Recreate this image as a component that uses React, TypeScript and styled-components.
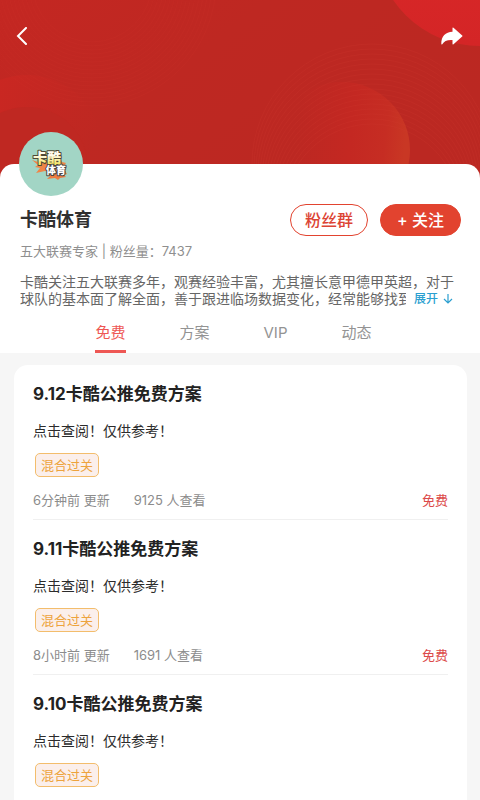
import React, { useState } from "react";
import styled, { createGlobalStyle } from "styled-components";

const GlobalStyle = createGlobalStyle`
  * { box-sizing: border-box; }
  body {
    margin: 0;
    background: #f6f6f6;
    color: #262626;
    font-family: Inter, "Noto Sans CJK SC", sans-serif;
  }
  button {
    margin: 0;
    padding: 0;
    border: 0;
    background: none;
    font-family: inherit;
    cursor: pointer;
  }
  h1, h2, p, ul { margin: 0; padding: 0; }
`;

const Page = styled.div`
  display: flex;
  flex-direction: column;
  min-height: 100vh;
  background: #f6f6f6;
`;

const Hero = styled.header`
  position: relative;
  height: 184px;
  overflow: hidden;
  background: #bd2822;
`;

const HeroArt = styled.svg`
  position: absolute;
  inset: 0;
  width: 100%;
  height: 100%;
`;

const TopBar = styled.nav`
  position: relative;
  display: flex;
  justify-content: space-between;
  align-items: center;
  padding: 20px 12px 0;
`;

const IconButton = styled.button`
  display: flex;
  align-items: center;
  justify-content: center;
  width: 32px;
  height: 32px;
  color: #fff;

  &:first-child { width: 20px; }
`;

const Sheet = styled.section`
  position: relative;
  margin-top: -20px;
  padding: 0 19px 0 20px;
  border-radius: 14px 14px 0 0;
  background: #fff;
`;

const Avatar = styled.div`
  width: 64px;
  height: 64px;
  margin: -32px 0 0 -1px;
  border-radius: 50%;
  overflow: hidden;
  background: #a2d5c5;

  svg { display: block; }
`;

const NameRow = styled.div`
  display: flex;
  align-items: center;
  gap: 12px;
  margin-top: 8px;
`;

const Name = styled.h1`
  flex: 1;
  font-size: 18px;
  line-height: 24px;
  font-weight: 700;
  color: #303030;
`;

const Pill = styled.button<{ $filled?: boolean }>`
  height: 32px;
  padding: 0 ${(p) => (p.$filled ? 16 : 14)}px;
  border: 1px solid #e2432f;
  border-radius: 16px;
  background: ${(p) => (p.$filled ? "#e2432f" : "#fff")};
  color: ${(p) => (p.$filled ? "#fff" : "#dc4434")};
  font-size: 16px;
  line-height: 30px;
  font-weight: 500;
  white-space: nowrap;
`;

const Stats = styled.p`
  margin-top: 6px;
  font-size: 13px;
  line-height: 18px;
  color: #8f8f8f;
`;

const Bio = styled.div`
  position: relative;
  margin-top: 13px;
`;

const BioText = styled.p<{ $open: boolean }>`
  max-height: ${(p) => (p.$open ? "none" : "34px")};
  overflow: hidden;
  font-size: 14px;
  line-height: 17px;
  color: #666;
`;

const Expand = styled.button`
  position: absolute;
  right: 0;
  bottom: 0;
  display: flex;
  align-items: center;
  gap: 5px;
  padding: 0 8px;
  background: #fff;
  color: #2b9fd0;
  font-size: 12px;
  line-height: 17px;
  font-weight: 500;
`;

const Tabs = styled.div`
  display: flex;
  justify-content: center;
  gap: 54px;
  padding: 16px 14px 0 0;
`;

const Tab = styled.button<{ $active: boolean }>`
  padding-bottom: 7px;
  border-bottom: 3px solid ${(p) => (p.$active ? "#ee5754" : "transparent")};
  color: ${(p) => (p.$active ? "#ee5754" : "#939393")};
  font-size: 15px;
  line-height: 20px;
`;

const Card = styled.ul`
  flex: 1;
  margin: 12px 13px 0 14px;
  padding: 0 19px;
  border-radius: 14px 14px 0 0;
  background: #fff;
  list-style: none;
`;

const Item = styled.li`
  padding: 17px 0 10px;

  &:not(:last-child) { border-bottom: 1px solid #f0f0f0; }
`;

const Title = styled.h2`
  font-size: 17px;
  line-height: 24px;
  font-weight: 700;
  color: #222;
`;

const Summary = styled.p`
  margin-top: 15px;
  font-size: 14px;
  line-height: 20px;
  color: #2c2c2c;
`;

const Tag = styled.span`
  display: block;
  width: fit-content;
  height: 24px;
  margin: 12px 0 0 2px;
  padding: 0 5px;
  border: 1px solid #f3bd6c;
  border-radius: 5px;
  background: #fbefeb;
  color: #eda33d;
  font-size: 13px;
  line-height: 22px;
`;

const Meta = styled.div`
  display: flex;
  gap: 24px;
  margin-top: 14px;
  font-size: 13px;
  line-height: 18px;
  color: #8c8c8c;
`;

const Price = styled.span`
  margin-left: auto;
  color: #dc4a4a;
`;

const rings = Array.from({ length: 17 }, (_, i) => i);

const TABS = ["免费", "方案", "VIP", "动态"];

type Post = { date: string; updated?: string; views?: string };

const POSTS: Post[] = [
  { date: "9.12", updated: "6分钟前 更新", views: "9125 人查看" },
  { date: "9.11", updated: "8小时前 更新", views: "1691 人查看" },
  { date: "9.10" },
];

function HeroBackground() {
  return (
    <HeroArt viewBox="0 0 480 184" preserveAspectRatio="xMidYMin slice" aria-hidden="true">
      <defs>
        <linearGradient id="base" x1="0" y1="0" x2="1" y2="0.5">
          <stop offset="0" stopColor="#c42722" />
          <stop offset="0.45" stopColor="#be2822" />
          <stop offset="1" stopColor="#bb2822" />
        </linearGradient>
        <linearGradient id="band" x1="0" y1="0" x2="1" y2="0.35">
          <stop offset="0.2" stopColor="#cc2722" />
          <stop offset="1" stopColor="#c42722" stopOpacity="0" />
        </linearGradient>
        <linearGradient id="ball" x1="0" y1="0" x2="1" y2="0.1">
          <stop offset="0.2" stopColor="#c42722" stopOpacity="0" />
          <stop offset="0.6" stopColor="#c42822" />
          <stop offset="0.85" stopColor="#c62d23" />
          <stop offset="1" stopColor="#c93724" />
        </linearGradient>
        <linearGradient id="corner" x1="0" y1="0" x2="0" y2="1">
          <stop offset="0.5" stopColor="#d92828" />
          <stop offset="1" stopColor="#d42526" />
        </linearGradient>
      </defs>
      <rect width="480" height="184" fill="url(#base)" />
      <circle cx="27" cy="150" r="75" fill="url(#band)" />
      <ellipse cx="27" cy="164" rx="60" ry="57" fill="#bf2822" />
      <circle cx="342" cy="150" r="68" fill="url(#ball)" />
      <g fill="none" stroke="#d33a31" strokeWidth="1">
        {rings.map((i) => (
          <circle key={i} cx="372" cy={164 + i * 3} r={120 - i * 2} opacity="0.2" />
        ))}
        {rings.map((i) => (
          <circle key={i} cx="92" cy="-18" r={60 + i * 4} opacity="0.12" />
        ))}
      </g>
      <circle cx="480" cy="-59" r="105" fill="url(#corner)" />
    </HeroArt>
  );
}

function AvatarLogo() {
  const lettering = {
    fontFamily: '"Noto Sans CJK SC", sans-serif',
    fontWeight: 900,
    paintOrder: "stroke",
    strokeLinejoin: "round",
  } as const;
  return (
    <svg width="64" height="64" viewBox="0 0 64 64" role="img" aria-label="卡酷体育">
      <defs>
        <linearGradient id="gold" x1="0" y1="0" x2="0" y2="1">
          <stop offset="0.4" stopColor="#fffdf0" />
          <stop offset="0.9" stopColor="#f6e354" />
        </linearGradient>
      </defs>
      <path
        d="M13 28l6 2 22-5 2 5 4 1-2 3 2 6-9 1-12-2-9 2 4-5-5-1 3-2z"
        fill="#ef8547"
      />
      <path d="M28 41l18-2 2 3-3 1 2 2-6 1-2 2-3-2-8 1 3-3z" fill="#ee7c41" />
      <text x="14" y="31" fontSize="14" fill="url(#gold)" stroke="#4f4834" strokeWidth="2" {...lettering}>
        卡酷
      </text>
      <text x="27" y="42" fontSize="10" fill="#fff" stroke="#4b4340" strokeWidth="2" {...lettering}>
        体育
      </text>
    </svg>
  );
}

export default function App() {
  const [active, setActive] = useState("免费");
  const [open, setOpen] = useState(false);

  return (
    <Page>
      <GlobalStyle />
      <Hero>
        <HeroBackground />
        <TopBar>
          <IconButton aria-label="返回">
            <svg width="12" height="18" viewBox="0 0 12 18" fill="none">
              <path d="M10 1L2 9l8 8" stroke="currentColor" strokeWidth="2" strokeLinecap="round" />
            </svg>
          </IconButton>
          <IconButton aria-label="分享">
            <svg width="22" height="18" viewBox="0 0 22 18">
              <path
                d="M11.5 1.2Q11.5 0 12.5.7L21.2 8.4Q22 9 21.2 9.6L12.5 17.2Q11.5 18 11.5 16.8V13C6.5 12.6 3 14 1.3 17.2Q.4 18 .3 16.8C.2 9.5 4.5 5 11.5 4.8Z"
                fill="currentColor"
              />
            </svg>
          </IconButton>
        </TopBar>
      </Hero>

      <Sheet>
        <Avatar>
          <AvatarLogo />
        </Avatar>
        <NameRow>
          <Name>卡酷体育</Name>
          <Pill>粉丝群</Pill>
          <Pill $filled>+ 关注</Pill>
        </NameRow>
        <Stats>五大联赛专家 | 粉丝量：7437</Stats>
        <Bio>
          <BioText $open={open}>
            卡酷关注五大联赛多年，观赛经验丰富，尤其擅长意甲德甲英超，对于球队的基本面了解全面，善于跟进临场数据变化，经常能够找到
          </BioText>
          {!open && (
            <Expand onClick={() => setOpen(true)}>
              展开
              <svg width="10" height="11" viewBox="0 0 10 11" fill="none" aria-hidden="true">
                <path d="M5 1v9M1 6l4 4 4-4" stroke="currentColor" strokeWidth="1.2" />
              </svg>
            </Expand>
          )}
        </Bio>
        <Tabs role="tablist">
          {TABS.map((tab) => (
            <Tab
              key={tab}
              role="tab"
              aria-selected={tab === active}
              $active={tab === active}
              onClick={() => setActive(tab)}
            >
              {tab}
            </Tab>
          ))}
        </Tabs>
      </Sheet>

      <Card>
        {POSTS.map((post) => (
          <Item key={post.date}>
            <Title>{post.date}卡酷公推免费方案</Title>
            <Summary>点击查阅！仅供参考！</Summary>
            <Tag>混合过关</Tag>
            {post.updated && (
              <Meta>
                <span>{post.updated}</span>
                <span>{post.views}</span>
                <Price>免费</Price>
              </Meta>
            )}
          </Item>
        ))}
      </Card>
    </Page>
  );
}
